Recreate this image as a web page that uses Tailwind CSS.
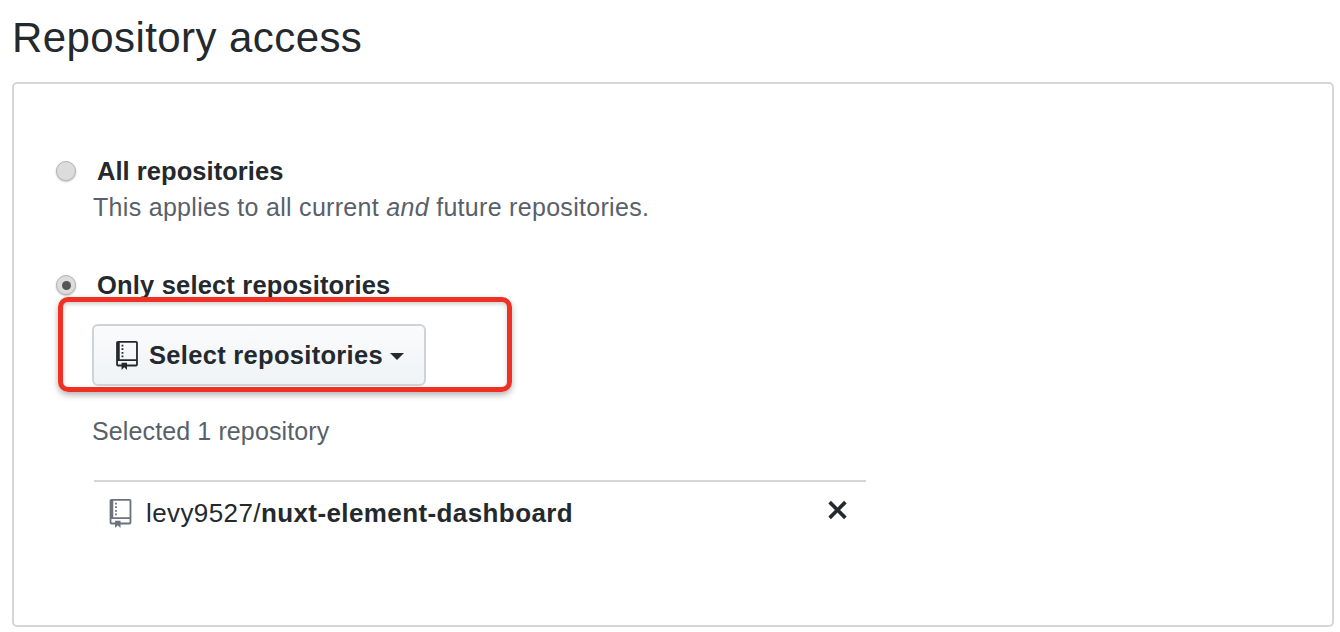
<!DOCTYPE html>
<html lang="en">
<head>
  <meta charset="UTF-8" />
  <title>Repository access</title>
  <script src="https://cdn.jsdelivr.net/npm/@tailwindcss/browser@4"></script>
</head>
<body class="bg-white w-[1340px] h-[632px] overflow-hidden font-['Liberation_Sans',Arial,sans-serif] text-[#24292e] relative">
  <h1 class="pl-[12px] pt-[13px] h-[82px] text-[42px] leading-[50px] font-normal tracking-[0.42px]">Repository access</h1>

  <div class="ml-[12px] w-[1322px] h-[545px] border-2 border-[#d6d6d6] rounded-[5px] pt-[71px] pl-[42px]">
    <!-- all repositories -->
    <div class="flex items-center h-[32px]">
      <span class="w-[20px] h-[20px] rounded-full border border-[#b5b5b5] bg-[#dcdcdc] shadow-[0_1px_2px_rgba(0,0,0,0.25)]"></span>
      <label class="ml-[21px] text-[25.5px] leading-[32px] font-bold tracking-[0.05px]">All repositories</label>
    </div>
    <p class="ml-[37px] mt-[5px] text-[25px] leading-[30px] text-[#586069] tracking-[0.3px]">This applies to all current <em>and</em> future repositories.</p>

    <!-- only select -->
    <div class="flex items-center h-[32px] mt-[47px]">
      <span class="w-[20px] h-[20px] rounded-full border border-[#b5b5b5] bg-[#dcdcdc] shadow-[0_1px_2px_rgba(0,0,0,0.25)] flex items-center justify-center">
        <span class="w-[9px] h-[9px] rounded-full bg-[#555555]"></span>
      </span>
      <label class="ml-[21px] text-[25.5px] leading-[32px] font-bold tracking-[0.18px]">Only select repositories</label>
    </div>

    <div class="ml-[36px] mt-[23px] w-[334px] h-[62px] border-2 border-[#cfd2d6] rounded-[6px] bg-gradient-to-b from-[#fafbfc] to-[#eff3f6] flex items-center pl-[22px]">
      <svg class="w-[22px] h-[29px] fill-[#24292e]" viewBox="0 0 12 16"><path d="M4 9H3V8h1v1zm0-3H3v1h1V6zm0-2H3v1h1V4zm0-2H3v1h1V2zm8-1v12c0 .55-.45 1-1 1H6v2l-1.5-1.5L3 16v-2H1c-.55 0-1-.45-1-1V1c0-.55.45-1 1-1h10c.55 0 1 .45 1 1zm-1 10H1v2h2v-1h3v1h5v-2zm0-10H2v9h9V1z"/></svg>
      <span class="ml-[11px] text-[25.5px] leading-[32px] font-bold tracking-[0.3px]">Select repositories</span>
      <span class="ml-[7px] mt-[2px] w-0 h-0 border-x-[7px] border-x-transparent border-t-[7px] border-t-[#24292e]"></span>
    </div>

    <p class="ml-[36px] mt-[30px] text-[25px] leading-[30px] text-[#586069] tracking-[0.12px]">Selected 1 repository</p>

    <div class="ml-[38px] mt-[34px] w-[772px] border-t-2 border-[#d6d6d6] h-[64px] flex items-center relative">
      <svg class="ml-[15px] w-[23px] h-[29px] fill-[#6a737d]" viewBox="0 0 12 16"><path d="M4 9H3V8h1v1zm0-3H3v1h1V6zm0-2H3v1h1V4zm0-2H3v1h1V2zm8-1v12c0 .55-.45 1-1 1H6v2l-1.5-1.5L3 16v-2H1c-.55 0-1-.45-1-1V1c0-.55.45-1 1-1h10c.55 0 1 .45 1 1zm-1 10H1v2h2v-1h3v1h5v-2zm0-10H2v9h9V1z"/></svg>
      <span class="ml-[14px] text-[26px] leading-[32px] tracking-[0.4px]">levy9527/<b class="font-bold">nuxt-element-dashboard</b></span>
      <svg class="ml-auto mr-[18px] mb-[6px] w-[21px] h-[28px] fill-[#24292e]" viewBox="0 0 12 16"><path d="M7.48 8l3.75 3.75-1.48 1.48L6 9.48l-3.75 3.75-1.48-1.48L4.52 8 .77 4.25l1.48-1.48L6 6.52l3.75-3.75 1.48 1.48L7.48 8z"/></svg>
    </div>
  </div>

  <!-- red annotation -->
  <div class="absolute left-[58px] top-[297px] w-[454px] h-[95px] border-[5px] border-[#ee3124] rounded-[10px] shadow-[0_3px_6px_rgba(0,0,0,0.3),inset_0_2px_4px_rgba(0,0,0,0.2)]"></div>
</body>
</html>
